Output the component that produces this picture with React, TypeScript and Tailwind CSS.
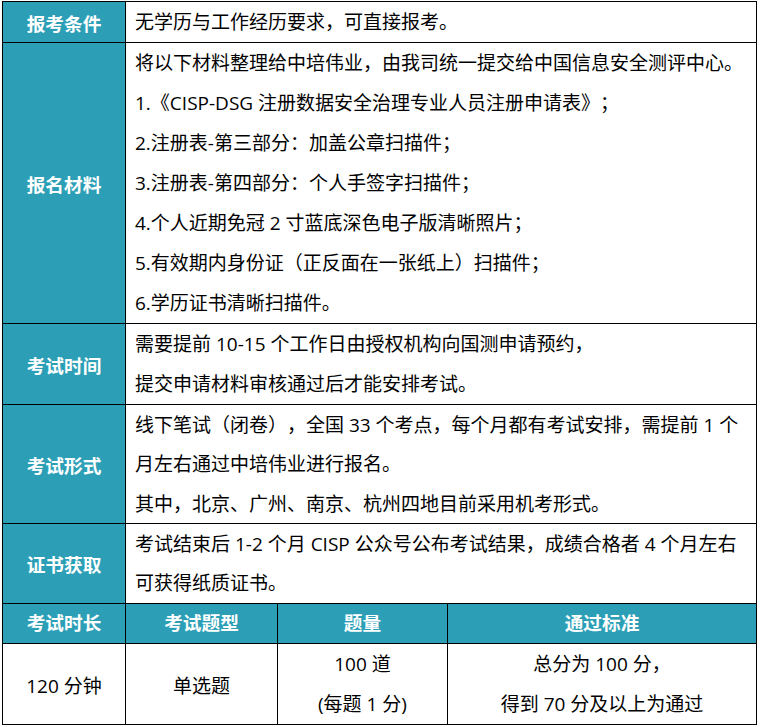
import React from 'react';

const head = 'border border-black bg-[#2c9fb7] text-white font-bold text-center align-middle';
const cell = 'border border-black align-top pl-[9px] pr-0';

const materials = [
  '将以下材料整理给中培伟业，由我司统一提交给中国信息安全测评中心。',
  '1.《CISP-DSG 注册数据安全治理专业人员注册申请表》；',
  '2.注册表-第三部分：加盖公章扫描件；',
  '3.注册表-第四部分：个人手签字扫描件；',
  '4.个人近期免冠 2 寸蓝底深色电子版清晰照片；',
  '5.有效期内身份证（正反面在一张纸上）扫描件；',
  '6.学历证书清晰扫描件。',
];

function Lines({ lines, h = 'h-[40px]' }: { lines: string[]; h?: string }) {
  return (
    <>
      {lines.map((l, i) => (
        <div key={i} className={`${h} pt-[4px] whitespace-nowrap`}>{l}</div>
      ))}
    </>
  );
}

export default function App() {
  return (
    <div className="bg-white w-[761px] h-[727px] pl-[2px] pt-[1px] font-['Open_Sans','Noto_Sans_CJK_SC',sans-serif] text-[19px] leading-[32px] text-black [text-spacing-trim:space-all]">
      <table className="border-collapse table-fixed w-[754px]">
        <colgroup>
          <col className="w-[123px]" />
          <col className="w-[152px]" />
          <col className="w-[170px]" />
          <col className="w-[309px]" />
        </colgroup>
        <tbody>
          <tr>
            <td className={head}><div className="pt-[4px] text-[18.67px]">报考条件</div></td>
            <td colSpan={3} className={cell}>
              <Lines lines={['无学历与工作经历要求，可直接报考。']} />
            </td>
          </tr>
          <tr>
            <td className={head}><div className="pt-[4px] text-[18.67px]">报名材料</div></td>
            <td colSpan={3} className={cell}>
              <Lines lines={materials} />
            </td>
          </tr>
          <tr>
            <td className={head}><div className="pt-[4px] text-[18.67px]">考试时间</div></td>
            <td colSpan={3} className={cell}>
              <Lines lines={['需要提前 10-15 个工作日由授权机构向国测申请预约，', '提交申请材料审核通过后才能安排考试。']} />
            </td>
          </tr>
          <tr>
            <td className={head}><div className="pt-[4px] text-[18.67px]">考试形式</div></td>
            <td colSpan={3} className={cell}>
              <Lines
                h="h-[39.34px]"
                lines={[
                  '线下笔试（闭卷），全国 33 个考点，每个月都有考试安排，需提前 1 个',
                  '月左右通过中培伟业进行报名。',
                  '其中，北京、广州、南京、杭州四地目前采用机考形式。',
                ]}
              />
            </td>
          </tr>
          <tr>
            <td className={head}><div className="pt-[4px] text-[18.67px]">证书获取</div></td>
            <td colSpan={3} className={cell}>
              <Lines
                h="h-[39.5px]"
                lines={['考试结束后 1-2 个月 CISP 公众号公布考试结果，成绩合格者 4 个月左右', '可获得纸质证书。']}
              />
            </td>
          </tr>
          <tr>
            <td className={head}><div className="h-[39px] pt-[3px] text-[18.67px]">考试时长</div></td>
            <td className={head}><div className="h-[39px] pt-[3px] text-[18.67px]">考试题型</div></td>
            <td className={head}><div className="h-[39px] pt-[3px] text-[18.67px]">题量</div></td>
            <td className={head}><div className="h-[39px] pt-[3px] text-[18.67px]">通过标准</div></td>
          </tr>
          <tr className="text-center">
            <td className="border border-black align-middle"><div className="pt-[4px]">120 分钟</div></td>
            <td className="border border-black align-middle"><div className="pt-[4px]">单选题</div></td>
            <td className="border border-black align-top">
              <Lines lines={['100 道', '(每题 1 分)']} />
            </td>
            <td className="border border-black align-top">
              <Lines lines={['总分为 100 分，', '得到 70 分及以上为通过']} />
            </td>
          </tr>
        </tbody>
      </table>
    </div>
  );
}
